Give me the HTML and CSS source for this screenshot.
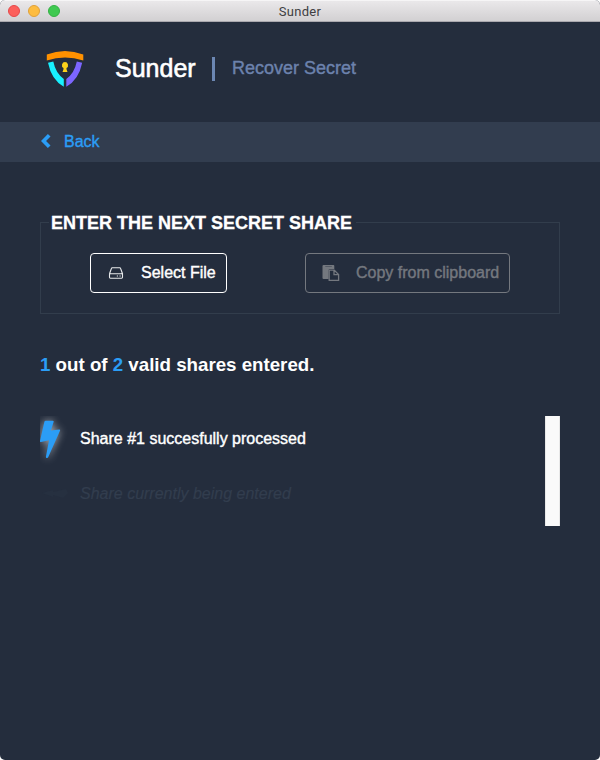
FILE: index.html
```html
<!DOCTYPE html>
<html lang="en">
<head>
<meta charset="utf-8">
<title>Sunder</title>
<link rel="stylesheet" href="styles.css">
</head>
<body>
<div class="window">
  <div class="titlebar">
    <div class="lights"><i class="light close"></i><i class="light minimize"></i><i class="light zoom"></i></div>
    <span class="window-title">Sunder</span>
  </div>
  <header class="header">
    <svg class="logo" viewBox="0 0 40 38" width="40" height="38">
      <path fill="#ff9100" d="M1.8 4.4Q20-2.6 38.3 4.4V10.6Q20 4.4 1.8 10.6Z"/>
      <path fill="#18f0ff" d="M3 12.8L8.3 11.5Q10.6 23 18.8 29V36.8Q6.5 30 3 12.8Z"/>
      <path fill="#7c66ff" d="M37.2 12.8L31.8 11.5Q29.5 23 21.3 29V36.8Q33.7 30 37.2 12.8Z"/>
      <path fill="#fbd11b" d="M20 12.1a3.1 3.1 0 0 1 1.5 5.8V19.3L22.5 22H17.5L18.5 19.3V17.9A3.1 3.1 0 0 1 20 12.1Z"/>
    </svg>
    <h1 class="brand">Sunder</h1>
    <span class="divider"></span>
    <span class="subtitle">Recover Secret</span>
  </header>
  <nav class="nav">
    <a class="back">
      <svg width="10" height="16" viewBox="0 0 10 16"><path d="M8.2 2.2L2.5 8L8.2 13.8" fill="none" stroke="#2b9df6" stroke-width="3.7"/></svg>
      <span>Back</span>
    </a>
  </nav>
  <main class="content">
    <fieldset class="share-input">
      <legend><span>ENTER THE NEXT SECRET SHARE</span></legend>
      <button class="button select">
        <svg width="16" height="16" viewBox="0 0 16 16" fill="none" stroke="#e8eaec" stroke-width="1.1"><path d="M1.5 8.7L3.4 3.5Q3.6 2.8 4.3 2.8H11.7Q12.4 2.8 12.6 3.5L14.5 8.7V12.3Q14.5 13.2 13.6 13.2H2.4Q1.5 13.2 1.5 12.3V9.5Q1.5 8.7 2.4 8.7H13.6Q14.5 8.7 14.5 9.5"/><path d="M8.8 11H10M11.5 11H12.7"/></svg>
        <span>Select File</span>
      </button>
      <button class="button paste" disabled>
        <svg width="18" height="18" viewBox="0 0 18 18"><path fill="#74787f" d="M1.5 1H11.5Q12.3 1 12.3 2V5.1H8Q6.6 5.1 6.6 6.3V15H1.5Q.5 15 .5 14V2Q.5 1 1.5 1Z"/><path fill="#545a65" d="M3.3 2H9.8V3H3.3Z"/><path fill="none" stroke="#74787f" stroke-width="1.3" d="M7.2 6.1H12.2L16.6 10.5V16.4H7.2ZM12 6.1V10.7H16.6"/></svg>
        <span>Copy from clipboard</span>
      </button>
    </fieldset>
    <p class="progress"><b>1</b> out of <b>2</b> valid shares entered.</p>
    <div class="share-list">
      <ul class="shares">
        <li class="share">
          <svg class="bolt" width="30" height="46" viewBox="0 0 30 46"><path fill="#2b9df6" d="M4.4 5.8Q4.7 4.8 5.7 4.8H12.7Q14 4.8 13.6 6L10.9 14.6L19 13.4Q20.5 13.2 20 14.7L8.2 41.2Q7.7 42.2 6.6 41.9Q5.7 41.6 6 40.3L9 24.2L1 26Q-.2 26.1 0 24.8Z"/></svg>
          <span>Share #1 succesfully processed</span>
        </li>
        <li class="share pending">
          <svg width="30" height="18" viewBox="0 0 30 18"><path fill="#263040" d="M2 8L13 5V7L26 4L28 8L23 13L13 10V12Z"/></svg>
          <span>Share currently being entered</span>
        </li>
      </ul>
      <div class="scrollbar"></div>
    </div>
  </main>
</div>
</body>
</html>
```

FILE: styles.css
```css
* { box-sizing: border-box; }
body { margin: 0; background: #fff; font-family: "Liberation Sans", Arial, sans-serif; color: #fff; }
.window { width: 600px; height: 760px; background: #242d3d; border-radius: 5px; overflow: hidden; }
.titlebar { height: 22px; display: grid; grid-template-columns: 1fr auto 1fr; align-items: start; padding: 0 8px; background: linear-gradient(#eae8ea, #d2d0d2); border-top: 1px solid #f6f5f6; border-bottom: 1px solid #aaa8ae; }
.lights { display: flex; gap: 8px; padding-top: 4px; }
.light { width: 12px; height: 12px; border-radius: 50%; border: 1px solid; }
.close { background: #fc605c; border-color: #e5484a; }
.minimize { background: #fdbc40; border-color: #dfa03a; }
.zoom { background: #3fc950; border-color: #34b044; }
.window-title { padding-top: 1px; font: 13px/20px Roboto, sans-serif; color: #403e42; letter-spacing: .3px; }
.header { height: 100px; display: flex; align-items: center; padding: 0 45px 8px; }
.logo { margin-top: 1px; }
.brand { margin: 0 0 0 30px; width: 97px; font-size: 25px; line-height: 30px; font-weight: 400; -webkit-text-stroke: .6px; }
.divider { width: 3px; height: 24px; background: #6c87b3; margin: 2px 17px 0 0; }
.subtitle { font-size: 18px; color: #6c82ad; -webkit-text-stroke: .4px; }
.nav { height: 40px; background: #323d4f; padding: 0 41px; display: flex; align-items: center; }
.back { display: flex; align-items: center; gap: 13px; color: #2b9df6; font-size: 16px; line-height: 20px; -webkit-text-stroke: .35px; }
.back svg { margin-top: -3px; }
.content { padding: 50px 40px 0; }
.share-input { margin: 0; height: 102px; padding: 20px 49px 0; border: 1px solid #323d4c; display: flex; justify-content: space-between; align-items: flex-start; }
.share-input legend { margin-left: -41px; padding: 1px 4px 0 2px; font-size: 18px; line-height: 20px; font-weight: 700; -webkit-text-stroke: .3px; }
.button { height: 40px; padding: 0 10px 0 17px; display: flex; align-items: center; font: 16px "Liberation Sans", Arial, sans-serif; color: #fff; background: none; border: 1px solid #fff; border-radius: 4px; -webkit-text-stroke: .4px; }
.button svg { flex: none; }
.select { width: 137px; }
.select span { margin-left: 17px; white-space: nowrap; }
.paste { width: 205px; padding-left: 16px; color: #74787f; border-color: #74787f; }
.paste span { margin-left: 16px; white-space: nowrap; }
.progress { margin: 40px 0 0; font-size: 18.72px; line-height: 22px; font-weight: 700; }
.progress b { color: #2b9df6; }
.share-list { margin-top: 40px; height: 110px; display: flex; justify-content: space-between; overflow: hidden; }
.shares { margin: 0; padding: 0; list-style: none; overflow: hidden; }
.share { height: 46px; display: flex; align-items: center; gap: 10px; font-size: 16px; -webkit-text-stroke: .4px; }
.bolt { filter: drop-shadow(0 0 4px #fff9); }
.pending { height: 64px; font-style: italic; color: #323d4e; -webkit-text-stroke: .2px; }
.scrollbar { width: 15px; background: #fafafa; border: solid #e8e8e8; border-width: 0 1px; }
```
